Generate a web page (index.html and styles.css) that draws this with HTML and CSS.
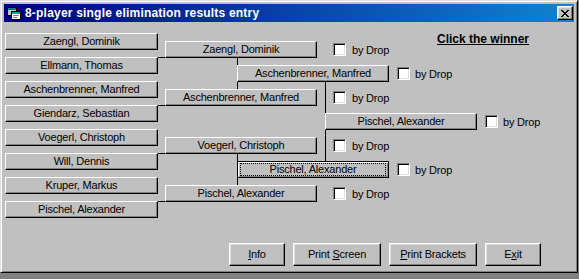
FILE: index.html
```html
<!DOCTYPE html>
<html>
<head>
<meta charset="utf-8">
<title>8-player single elimination results entry</title>
<link rel="stylesheet" href="styles.css">
</head>
<body>
<div class="window">
  <div class="titlebar">
    <svg class="app-icon" width="16" height="16" viewBox="0 0 16 16" shape-rendering="crispEdges">
      <rect x="1.5" y="2.5" width="9" height="8" fill="#c0c0c0" stroke="#000"/>
      <rect x="2" y="3" width="8" height="2" fill="#008080"/>
      <rect x="5.5" y="6.5" width="9" height="8" fill="#fff" stroke="#000"/>
      <rect x="6" y="7" width="8" height="2" fill="#00a8a8"/>
      <rect x="7" y="10" width="6" height="1" fill="#808080"/>
      <rect x="7" y="12" width="4" height="1" fill="#808080"/>
    </svg>
    <span class="title">8-player single elimination results entry</span>
    <button class="close" aria-label="Close">
      <svg width="8" height="7" viewBox="0 0 8 7" shape-rendering="crispEdges"><path d="M0 0h2v1H0zM6 0h2v1H6zM1 1h2v1H1zM5 1h2v1H5zM2 2h4v1H2zM3 3h2v1H3zM2 4h4v1H2zM1 5h2v1H1zM5 5h2v1H5zM0 6h2v1H0zM6 6h2v1H6z" fill="#000"/></svg>
    </button>
  </div>
  <div class="client">
    <div class="bracket">
      <svg class="lines" width="569" height="221" viewBox="0 0 569 221" shape-rendering="crispEdges">
        <g fill="#000">
          <rect x="154" y="35" width="80" height="1"/>
          <rect x="154" y="83" width="80" height="1"/>
          <rect x="233" y="35" width="1" height="49"/>
          <rect x="154" y="131" width="80" height="1"/>
          <rect x="154" y="179" width="80" height="1"/>
          <rect x="233" y="131" width="1" height="49"/>
          <rect x="321" y="59" width="1" height="97"/>
        </g>
      </svg>
      <div class="round r1">
        <button class="slot">Zaengl, Dominik</button>
        <button class="slot">Ellmann, Thomas</button>
        <button class="slot">Aschenbrenner, Manfred</button>
        <button class="slot">Giendarz, Sebastian</button>
        <button class="slot">Voegerl, Christoph</button>
        <button class="slot">Will, Dennis</button>
        <button class="slot">Kruper, Markus</button>
        <button class="slot">Pischel, Alexander</button>
      </div>
      <div class="round r2">
        <div class="match"><button class="slot">Zaengl, Dominik</button><label class="drop"><span class="check"></span>by Drop</label></div>
        <div class="match"><button class="slot">Aschenbrenner, Manfred</button><label class="drop"><span class="check"></span>by Drop</label></div>
        <div class="match"><button class="slot">Voegerl, Christoph</button><label class="drop"><span class="check"></span>by Drop</label></div>
        <div class="match"><button class="slot">Pischel, Alexander</button><label class="drop"><span class="check"></span>by Drop</label></div>
      </div>
      <div class="round r3">
        <div class="match"><button class="slot">Aschenbrenner, Manfred</button><label class="drop"><span class="check"></span>by Drop</label></div>
        <div class="match"><button class="slot focus">Pischel, Alexander</button><label class="drop"><span class="check"></span>by Drop</label></div>
      </div>
      <div class="round r4">
        <div class="match"><button class="slot">Pischel, Alexander</button><label class="drop"><span class="check"></span>by Drop</label></div>
      </div>
      <p class="heading">Click the winner</p>
    </div>
    <div class="actions">
      <button class="btn narrow"><u>I</u>nfo</button>
      <button class="btn wide">Print <u>S</u>creen</button>
      <button class="btn wide"><u>P</u>rint Brackets</button>
      <button class="btn narrow">E<u>x</u>it</button>
    </div>
  </div>
</div>
</body>
</html>
```
FILE: styles.css
```css
* { box-sizing: border-box; }

html, body { margin: 0; }

body {
  background: #808080;
  font-family: "Liberation Sans", Arial, sans-serif;
  font-size: 11px;
  color: #000;
}

.window {
  width: 578px;
  height: 273px;
  background: #c0c0c0;
  border: 1px solid;
  border-color: #dfdfdf #000 #000 #dfdfdf;
  box-shadow: inset 1px 1px #fff, inset -1px -1px #808080;
  padding: 3px;
  display: flex;
  flex-direction: column;
}

.titlebar {
  height: 18px;
  flex: none;
  display: flex;
  align-items: center;
  gap: 3px;
  padding: 0 1px 0 2px;
  background: linear-gradient(to right, #000080, #1084d0);
  color: #fff;
}

.app-icon { display: block; flex: none; }

.title {
  flex: 1;
  font-weight: bold;
  font-size: 12px;
  letter-spacing: 0.2px;
  line-height: 18px;
  white-space: nowrap;
}

.close, .slot, .btn {
  font: inherit;
  color: #000;
  background: #c0c0c0;
  border: 1px solid;
  border-color: #fff #000 #000 #fff;
  box-shadow: inset -1px -1px #808080;
  padding: 0;
  margin: 0;
  letter-spacing: -0.2px;
  line-height: 1;
}

.close {
  width: 16px;
  height: 14px;
  flex: none;
  display: flex;
  align-items: center;
  justify-content: center;
  box-shadow: inset -1px -1px #808080, inset 1px 1px #dfdfdf;
}

.close svg { display: block; margin-left: -1px; }

.client {
  flex: 1;
  display: flex;
  flex-direction: column;
}

.bracket {
  display: grid;
  height: 221px;
  flex: none;
}

.bracket > * {
  grid-area: 1 / 1;
  align-self: start;
}

.lines { display: block; }

.round {
  display: flex;
  flex-direction: column;
  align-items: flex-start;
}

.r1 { padding: 11px 0 0 1px; gap: 7px; }
.r2 { padding: 19px 0 0 161px; gap: 31px; }
.r3 { padding: 43px 0 0 233px; gap: 79px; }
.r4 { padding: 91px 0 0 321px; }

.slot {
  width: 152px;
  height: 17px;
  white-space: nowrap;
}

.r1 .slot { width: 153px; }

.slot.focus {
  position: relative;
  border-color: #000;
  box-shadow: inset 1px 1px #fff, inset -1px -1px #808080;
}

.slot.focus::after {
  content: "";
  position: absolute;
  inset: 1px 2px;
  border: 1px dotted #000;
}

.match {
  display: flex;
  align-items: center;
  gap: 8px;
}

.r2 .match { gap: 16px; }

.drop {
  display: flex;
  align-items: center;
  gap: 5px;
  white-space: nowrap;
  letter-spacing: -0.2px;
}

.r2 .drop { gap: 6px; }

.check {
  display: block;
  width: 13px;
  height: 13px;
  background: #fff;
  border: 1px solid;
  border-color: #808080 #fff #fff #808080;
  box-shadow: inset 1px 1px #000, inset -1px -1px #dfdfdf;
}

.heading {
  margin: 0;
  padding: 10px 0 0 433px;
  font-weight: bold;
  font-size: 12px;
  line-height: 14px;
  text-decoration: underline;
}

.actions {
  display: flex;
  gap: 8px;
  padding-left: 225px;
}

.btn {
  height: 23px;
  box-shadow: inset -1px -1px #808080, inset 1px 1px #dfdfdf;
}

.btn.narrow { width: 56px; }
.btn.wide { width: 88px; }
```
